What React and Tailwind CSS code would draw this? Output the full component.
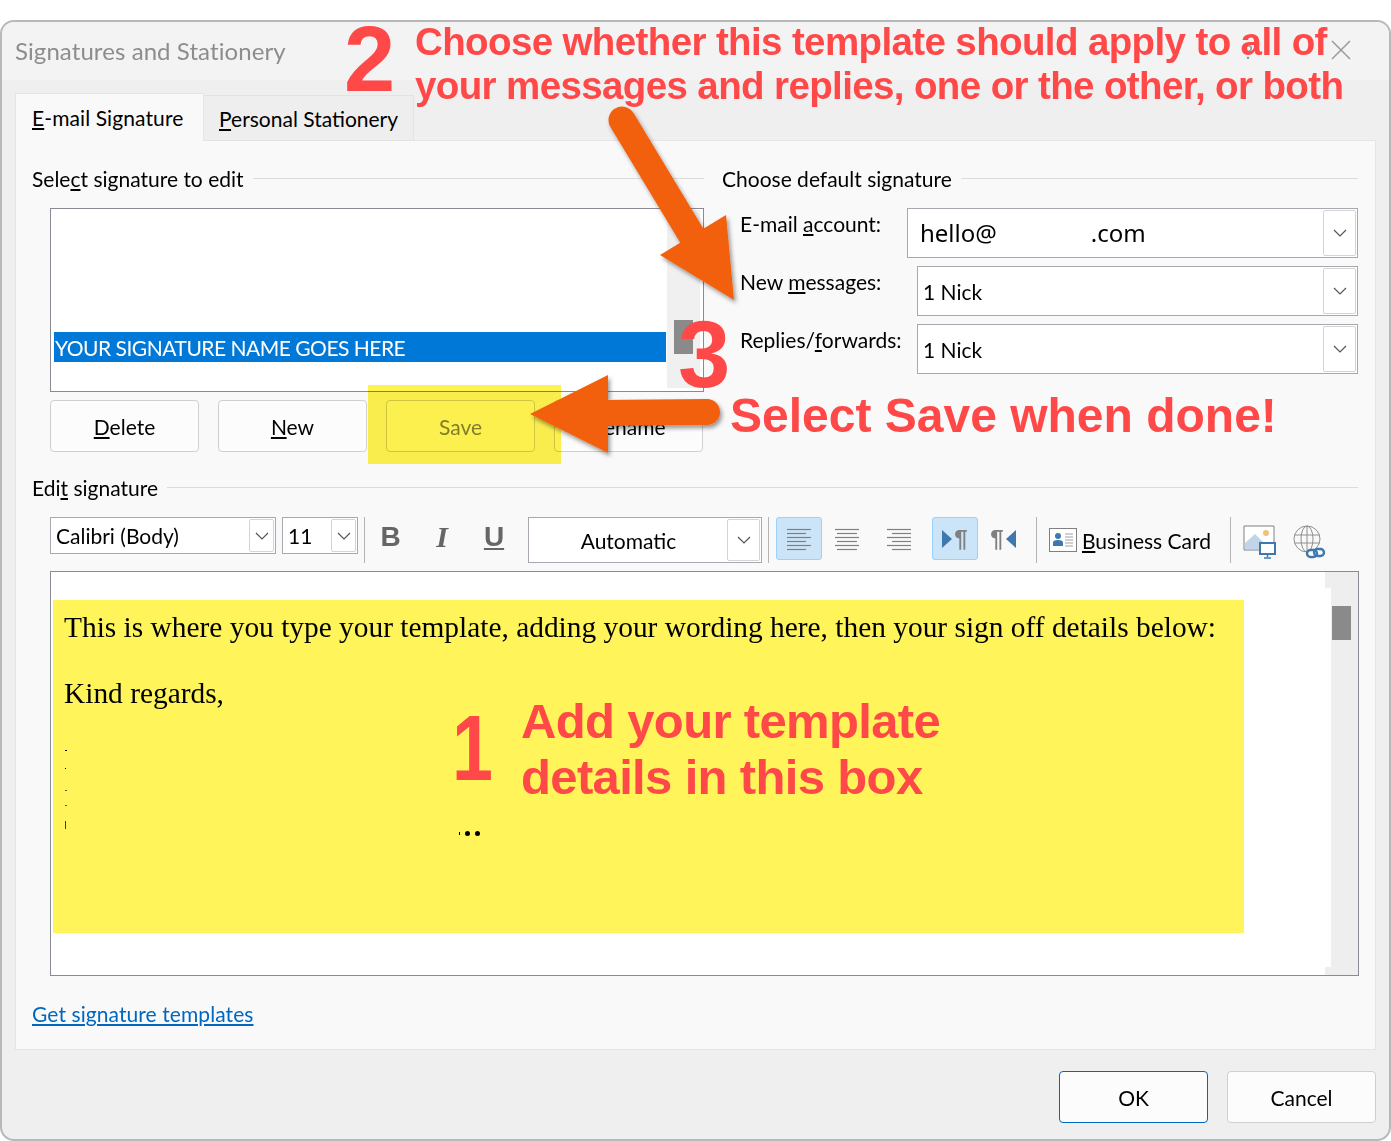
const ui = { fontFamily: '"Lato", "Noto Sans", sans-serif' };

function Chevron() {
  return (
    <svg width="14" height="8" viewBox="0 0 14 8" fill="none" stroke="#555" strokeWidth="1.2">
      <path d="M1 1l6 6 6-6" />
    </svg>
  );
}

function GroupHeader({ children, className = "" }) {
  return (
    <div className={`flex items-center gap-[9px] h-[28px] ${className}`}>
      <span className="whitespace-nowrap">{children}</span>
      <div className="flex-1 h-px mb-[2px] bg-[#dcdcdc]" />
    </div>
  );
}

function Btn({ children, className = "", edge = "border-[#cfcfcf]" }) {
  return (
    <div className={`w-[149px] h-[52px] pt-px rounded-[4px] border bg-[#fcfcfc] flex items-center justify-center ${edge} ${className}`}>
      {children}
    </div>
  );
}

function Select({ label, value, width, textClass = "pt-[3px]" }) {
  return (
    <div className="flex items-start h-[50px] mb-[8px]">
      <div className="mt-[2px] ml-[18px] h-[28px] flex items-center whitespace-nowrap">{label}</div>
      <div className={`ml-auto h-[50px] flex border border-[#a8a8b0] bg-white ${width}`}>
        <div className={`flex-1 flex items-center pl-[5px] ${textClass}`}>{value}</div>
        <div className="w-[33px] m-px border border-[#d4d4d4] rounded-[2px] flex items-center justify-center">
          <Chevron />
        </div>
      </div>
    </div>
  );
}

function MiniCombo({ value, width }) {
  return (
    <div className={`h-[37px] flex border border-[#a8a8b0] bg-white ${width}`}>
      <div className="flex-1 flex items-center pl-[5px] pt-px text-[21px]">{value}</div>
      <div className="w-[25px] m-px border border-[#d4d4d4] rounded-[2px] flex items-center justify-center">
        <Chevron />
      </div>
    </div>
  );
}

function Sep({ className = "" }) {
  return <div className={`w-px h-[46px] bg-[#b4b4b4] ${className}`} />;
}

function AlignIcon({ lines }) {
  return (
    <svg width="28" height="24" viewBox="0 0 28 24" stroke="#808080" strokeWidth="1.2">
      {lines.map(([a, b], i) => (
        <path key={i} d={`M${a} ${2.5 + i * 4}H${b}`} />
      ))}
    </svg>
  );
}

const leftLines = [[2, 26], [2, 21], [2, 26], [2, 21], [2, 26], [2, 21]];
const centerLines = [[2, 26], [4, 24], [2, 26], [4, 24], [2, 26], [4, 24]];
const rightLines = [[2, 26], [7, 26], [2, 26], [7, 26], [2, 26], [7, 26]];

function ToolSlot({ children, active, width = "w-[46px]" }) {
  return (
    <div className={`${width} h-[43px] rounded-[3px] flex items-center justify-center border ${active ? "bg-[#cce4f7] border-[#99d1ff]" : "border-transparent"}`}>
      {children}
    </div>
  );
}

function Pilcrow({ flip }) {
  return (
    <div className="flex items-center gap-[2px] text-[#808080]">
      {!flip && <svg width="10" height="18" viewBox="0 0 10 18"><path d="M0 0l10 9-10 9z" fill="#3f78ad" /></svg>}
      <span className="text-[24px] leading-none font-bold" style={{ fontFamily: '"Liberation Sans", sans-serif' }}>¶</span>
      {flip && <svg width="10" height="18" viewBox="0 0 10 18"><path d="M10 0L0 9l10 9z" fill="#3f78ad" /></svg>}
    </div>
  );
}

function CardIcon() {
  return (
    <svg width="28" height="24" viewBox="0 0 28 24" fill="none">
      <rect x="0.5" y="0.5" width="27" height="23" fill="#fff" stroke="#808080" />
      <circle cx="9" cy="8" r="3" fill="#3f78ad" />
      <path d="M4 18v-3.5c0-1.5 1.5-2.5 5-2.5s5 1 5 2.5V18z" fill="#3f78ad" />
      <path d="M16 6h8M16 9h8M16 12h8M16 15h8M16 18h8" stroke="#a0a0a0" />
    </svg>
  );
}

function PictureIcon() {
  return (
    <svg width="33" height="34" viewBox="0 0 33 34" fill="none">
      <path d="M24 25H1V1h30v18" stroke="#808080" fill="#fff" />
      <path d="M2 24V18l10-9 9 9v6z" fill="#c2d4e8" />
      <circle cx="23" cy="8" r="3" fill="#eec27c" />
      <rect x="17" y="18" width="15" height="11" fill="#fff" stroke="#3f78ad" strokeWidth="2" />
      <path d="M24.5 29v3M21 33h7" stroke="#3f78ad" strokeWidth="1.5" />
    </svg>
  );
}

function GlobeIcon() {
  return (
    <svg width="33" height="34" viewBox="0 0 33 34" fill="none">
      <g stroke="#909090">
        <circle cx="14" cy="14" r="13" />
        <ellipse cx="14" cy="14" rx="6" ry="13" />
        <path d="M14 1v26M1.5 10h25M1.5 18h25" />
      </g>
      <g stroke="#3f78ad" strokeWidth="2.4">
        <rect x="14" y="25" width="10" height="7" rx="3.5" fill="#fff" />
        <rect x="21" y="24" width="10" height="7" rx="3.5" />
      </g>
    </svg>
  );
}

const red = { fontFamily: '"Liberation Sans", Arial, sans-serif' };

export default function App() {
  return (
    <div className="relative w-[1391px] h-[1141px] overflow-hidden bg-white text-[21px] text-black" style={ui}>
      <div className="absolute left-0 top-[20px] w-[1391px] h-[1121px] rounded-[14px] border-2 border-[#b8b8b8] bg-[#efefef] overflow-hidden">
        <div className="h-[58px] bg-[#f3f3f3] flex items-center pl-[13px] text-[24px] tracking-[0.08px] text-[#8d8d8d] justify-between">
          <span>Signatures and Stationery</span>
          <svg width="20" height="20" viewBox="0 0 20 20" stroke="#9a9a9a" strokeWidth="1.5" className="mr-[38px] mb-[2px]">
            <path d="M1 1l18 18M19 1L1 19" />
          </svg>
        </div>

        <div className="flex items-end h-[48px] mt-[13px] pl-[13px] -mb-px relative z-10">
          <div className="w-[189px] h-[48px] bg-[#f9f9f9] border border-b-0 border-[#e5e5e5] flex items-center pl-[16px] pt-px">
            <span className="tracking-[0.1px]"><u>E</u>-mail Signature</span>
          </div>
          <div className="w-[210px] h-[46px] bg-[#eeeeee] border border-l-0 border-[#e3e3e3] flex items-center pl-[15px] pt-[2px]">
            <span><u>P</u>ersonal Stationery</span>
          </div>
        </div>

        <div className="ml-[13px] w-[1361px] h-[910px] bg-[#f9f9f9] border border-[#e5e5e5] pt-[24px] pl-[16px]">
          <div className="flex gap-[18px]">
            <div className="w-[672px]">
              <GroupHeader>Sele<u>c</u>t signature to edit</GroupHeader>
              <div className="relative mt-[15px] ml-[18px] h-[184px] border border-[#8a8a94] bg-white">
                <div className="absolute left-[3px] top-[123px] w-[612px] h-[30px] pt-[2px] bg-[#0078d7] text-white tracking-[-0.5px] flex items-center pl-px whitespace-nowrap">
                  YOUR SIGNATURE NAME GOES HERE
                </div>
                <div className="absolute right-[3px] top-px bottom-[3px] w-[33px] bg-[#f0f0f0]">
                  <div className="absolute left-[7px] top-[110px] w-[19px] h-[34px] bg-[#8a8a8a]" />
                </div>
              </div>
              <div className="flex gap-[19px] mt-[8px] ml-[18px]">
                <Btn><span><u>D</u>elete</span></Btn>
                <Btn><span><u>N</u>ew</span></Btn>
                <Btn className="text-[#838383]">Save</Btn>
                <Btn><span><u>R</u>ename</span></Btn>
              </div>
            </div>

            <div className="w-[636px]">
              <GroupHeader>Choose default signature</GroupHeader>
              <div className="mt-[15px]">
                <Select
                  label={<span>E-mail <u>a</u>ccount:</span>}
                  width="w-[451px]"
                  textClass=""
                  value={<span className="pl-[7px] text-[24px]" style={{ fontFamily: '"Noto Sans", sans-serif' }}>hello@<span className="inline-block w-[94px]" />.com</span>}
                />
                <Select label={<span>New <u>m</u>essages:</span>} width="w-[441px]" textClass="pt-[2px]" value="1 Nick" />
                <Select label={<span>Replies/<u>f</u>orwards:</span>} width="w-[441px]" textClass="pt-[2px]" value="1 Nick" />
              </div>
            </div>
          </div>

          <GroupHeader className="mt-[22px] w-[1326px]">Edi<u>t</u> signature</GroupHeader>

          <div className="flex items-start h-[46px] mt-[15px] ml-[18px]">
            <MiniCombo value="Calibri (Body)" width="w-[226px]" />
            <MiniCombo value="11" width="w-[76px] ml-[6px]" />
            <Sep className="ml-[6px]" />
            <div className="w-[51px] text-center text-[28px] leading-[40px] font-bold text-[#666]" style={red}>B</div>
            <div className="w-[52px] text-center text-[30px] leading-[40px] italic font-bold text-[#666]" style={{ fontFamily: '"Liberation Serif", serif' }}>I</div>
            <div className="w-[52px] text-center text-[28px] leading-[40px] font-bold underline text-[#666]" style={red}>U</div>
            <div className="ml-[8px] w-[234px] h-[46px] border border-[#a8a8b0] bg-white flex">
              <div className="flex-1 flex items-center justify-center pl-[2px] pt-[2px]">Automatic</div>
              <div className="w-[33px] m-px border border-[#d4d4d4] rounded-[2px] flex items-center justify-center">
                <Chevron />
              </div>
            </div>
            <Sep className="ml-[6px]" />
            <ToolSlot active width="w-[46px] ml-[7px]"><AlignIcon lines={leftLines} /></ToolSlot>
            <ToolSlot width="w-[50px]"><AlignIcon lines={centerLines} /></ToolSlot>
            <ToolSlot width="w-[50px] ml-[2px]"><AlignIcon lines={rightLines} /></ToolSlot>
            <ToolSlot active width="w-[46px] ml-[8px]"><Pilcrow /></ToolSlot>
            <ToolSlot width="w-[46px] ml-[2px]"><Pilcrow flip /></ToolSlot>
            <Sep className="ml-[10px]" />
            <div className="ml-[12px] h-[46px] flex items-center gap-[5px]">
              <CardIcon />
              <span className="whitespace-nowrap w-[128px] pt-[2px]"><u>B</u>usiness Card</span>
            </div>
            <Sep className="ml-[20px]" />
            <div className="ml-[12px] mt-[8px]"><PictureIcon /></div>
            <div className="ml-[17px] mt-[8px]"><GlobeIcon /></div>
          </div>

          <div className="relative mt-[8px] ml-[18px] w-[1309px] h-[405px] border border-[#8a8a94] bg-white flex" style={{ fontFamily: '"Liberation Serif", serif' }}>
            <div className="flex-1 pt-[28px] pl-[2px]">
              <div className="w-[1191px] h-[333px] bg-[#fff45a] pl-[11px] text-[29.4px]">
                <div className="h-[55px] flex items-center whitespace-nowrap">This is where you type your template, adding your wording here, then your sign off details below:</div>
                <div className="h-[66px] pt-[11px] flex items-center whitespace-nowrap">Kind regards,</div>
                <div className="ml-px mt-[29px] flex flex-col">
                  <div className="w-[2px] h-px bg-black" />
                  <div className="w-px h-px mt-[17px] bg-black" />
                  <div className="w-[2px] h-px mt-[21px] bg-[#555]" />
                  <div className="w-[2px] h-px mt-[14px] bg-[#555]" />
                  <div className="w-px h-[8px] mt-[15px] bg-[#7a2a00]" />
                </div>
              </div>
            </div>
            <div className="w-[27px] bg-[#eeeeee] relative">
              <div className="absolute left-px top-[34px] w-[19px] h-[34px] bg-[#8a8a8a]" />
            </div>
            <div className="absolute right-0 top-0 w-[33px] h-[16px] bg-[#eeeeee]" />
            <div className="absolute right-[27px] bottom-0 w-[6px] h-[8px] bg-[#eeeeee]" />
          </div>

          <div className="mt-[24px] h-[28px] flex items-center text-[#0067c0] underline tracking-[0.08px]">Get signature templates</div>
        </div>

        <div className="flex justify-end gap-[19px] mt-[21px] pr-[13px]">
          <Btn edge="border-[#0067c0]">OK</Btn>
          <Btn>Cancel</Btn>
        </div>
      </div>

      {/* annotations sit on top of the dialog */}
      <div className="absolute left-[368px] top-[385px] w-[193px] h-[79px] bg-[#fff350] mix-blend-multiply" />
      <div className="absolute left-[1244px] top-[36px] text-[20px] text-[#999]">?</div>

      <svg className="absolute left-0 top-0" width="1391" height="1141" viewBox="0 0 1391 1141">
        <defs>
          <filter id="arrowShadow" x="-20%" y="-20%" width="140%" height="140%">
            <feDropShadow dx="2" dy="3" stdDeviation="2" floodColor="#000" floodOpacity="0.4" />
          </filter>
        </defs>
        <g fill="#f2600b" filter="url(#arrowShadow)">
          <path d="M622 120L692 236" stroke="#f2600b" strokeWidth="27" strokeLinecap="round" />
          <path d="M726 215L734 300L660 255z" />
        </g>
        <g fill="#f2600b" filter="url(#arrowShadow)">
          <path d="M600 413L707 412" stroke="#f2600b" strokeWidth="26" strokeLinecap="round" />
          <path d="M608 375L608 453L530 414z" />
        </g>
      </svg>

      <div className="absolute inset-0 font-bold text-[#ff4848]" style={red}>
        <div className="absolute left-[344px] top-[8px] text-[92px] leading-[102px]">2</div>
        <div className="absolute left-[415px] top-[20px] text-[38.5px] tracking-[-0.62px] leading-[44px] whitespace-nowrap">
          <div>Choose whether this template should apply to all of</div>
          <div>your messages and replies, one or the other, or both</div>
        </div>
        <div className="absolute left-[678px] top-[304px] text-[94px] leading-[102px]">3</div>
        <div className="absolute left-[730px] top-[388px] text-[48px] leading-[56px] whitespace-nowrap">Select Save when done!</div>
        <div className="absolute left-[447px] top-[697px] text-[92px] leading-[102px] scale-x-[0.8]">1</div>
        <div className="absolute left-[521px] top-[693px] text-[49px] tracking-[-0.65px] leading-[56px] whitespace-nowrap">
          <div>Add your template</div>
          <div>details in this box</div>
        </div>
      </div>
      <div className="absolute left-[459px] top-[831px] flex gap-[5px] items-center">
        <div className="w-px h-[3px] bg-black" />
        <div className="w-[5px] h-[5px] rounded-full bg-black" />
        <div className="w-[5px] h-[5px] rounded-full bg-black" />
      </div>
    </div>
  );
}
